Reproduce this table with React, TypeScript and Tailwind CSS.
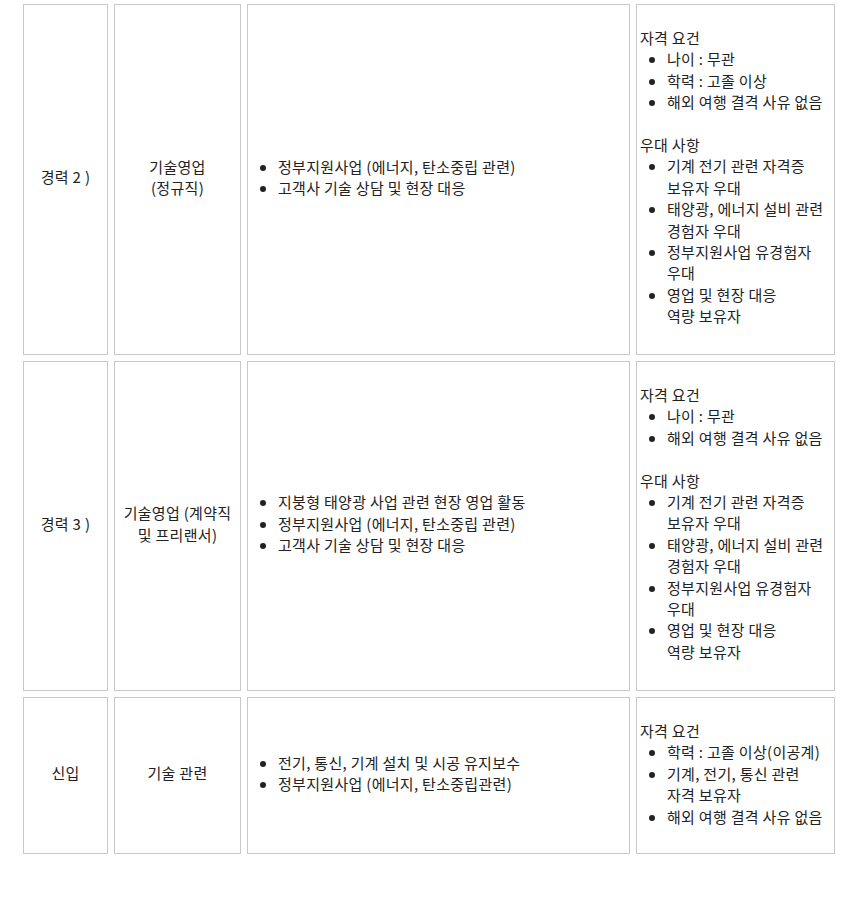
import React from 'react';

type Section = { title?: string; items: React.ReactNode[] };

type Row = {
  level: string;
  role: React.ReactNode;
  duties: string[];
  quals: Section[];
};

const rows: Row[] = [
  {
    level: '경력 2 )',
    role: (
      <>
        기술영업
        <br />
        (정규직)
      </>
    ),
    duties: ['정부지원사업 (에너지, 탄소중립 관련)', '고객사 기술 상담 및 현장 대응'],
    quals: [
      { title: '자격 요건', items: ['나이 : 무관', '학력 : 고졸 이상', '해외 여행 결격 사유 없음'] },
      {
        title: '우대 사항',
        items: [
          <>기계 전기 관련 자격증<br />보유자 우대</>,
          <>태양광, 에너지 설비 관련<br />경험자 우대</>,
          <>정부지원사업 유경험자<br />우대</>,
          <>영업 및 현장 대응<br />역량 보유자</>,
        ],
      },
    ],
  },
  {
    level: '경력 3 )',
    role: (
      <>
        기술영업 (계약직
        <br />
        및 프리랜서)
      </>
    ),
    duties: [
      '지붕형 태양광 사업 관련 현장 영업 활동',
      '정부지원사업 (에너지, 탄소중립 관련)',
      '고객사 기술 상담 및 현장 대응',
    ],
    quals: [
      { title: '자격 요건', items: ['나이 : 무관', '해외 여행 결격 사유 없음'] },
      {
        title: '우대 사항',
        items: [
          <>기계 전기 관련 자격증<br />보유자 우대</>,
          <>태양광, 에너지 설비 관련<br />경험자 우대</>,
          <>정부지원사업 유경험자<br />우대</>,
          <>영업 및 현장 대응<br />역량 보유자</>,
        ],
      },
    ],
  },
  {
    level: '신입',
    role: '기술 관련',
    duties: ['전기, 통신, 기계 설치 및 시공 유지보수', '정부지원사업 (에너지, 탄소중립관련)'],
    quals: [
      {
        title: '자격 요건',
        items: [
          '학력 : 고졸 이상(이공계)',
          <>기계, 전기, 통신 관련<br />자격 보유자</>,
          '해외 여행 결격 사유 없음',
        ],
      },
    ],
  },
];

const cell = 'border border-[#c8c8c8] px-[3px] flex';

const App: React.FC = () => {
  return (
    <div
      className="min-h-[900px] bg-white pl-[23px] pt-[4px] text-[15px] leading-[21.4px] tracking-[0.3px] text-[#222]"
      style={{ fontFamily: '"Noto Sans CJK KR", "Noto Sans", sans-serif' }}
    >
      <div className="grid grid-cols-[85px_127px_383px_199px] grid-rows-[351px_330px_157px] gap-[6px]">
        {rows.map((row, i) => (
          <React.Fragment key={i}>
            {/* 구분 */}
            <div className={`${cell} items-center justify-center pb-[5px] text-center`}>{row.level}</div>

            {/* 직무 */}
            <div className={`${cell} items-center justify-center pb-[5px] text-center`}>
              <div>{row.role}</div>
            </div>

            {/* 업무 내용 */}
            <div className={`${cell} items-center pb-[5px]`}>
              <ul className="list-disc pl-[27px]">
                {row.duties.map((d, j) => (
                  <li key={j}>{d}</li>
                ))}
              </ul>
            </div>

            {/* 자격 요건 / 우대 사항 */}
            <div className={`${cell} items-start pt-[22px] pb-[25px]`}>
              <div>
                {row.quals.map((s, j) => (
                  <div key={j} className={j > 0 ? 'mt-[21.4px]' : ''}>
                    {s.title && <div>{s.title}</div>}
                    <ul className="list-disc pl-[27px]">
                      {s.items.map((it, k) => (
                        <li key={k}>{it}</li>
                      ))}
                    </ul>
                  </div>
                ))}
              </div>
            </div>
          </React.Fragment>
        ))}
      </div>
    </div>
  );
};

export default App;
